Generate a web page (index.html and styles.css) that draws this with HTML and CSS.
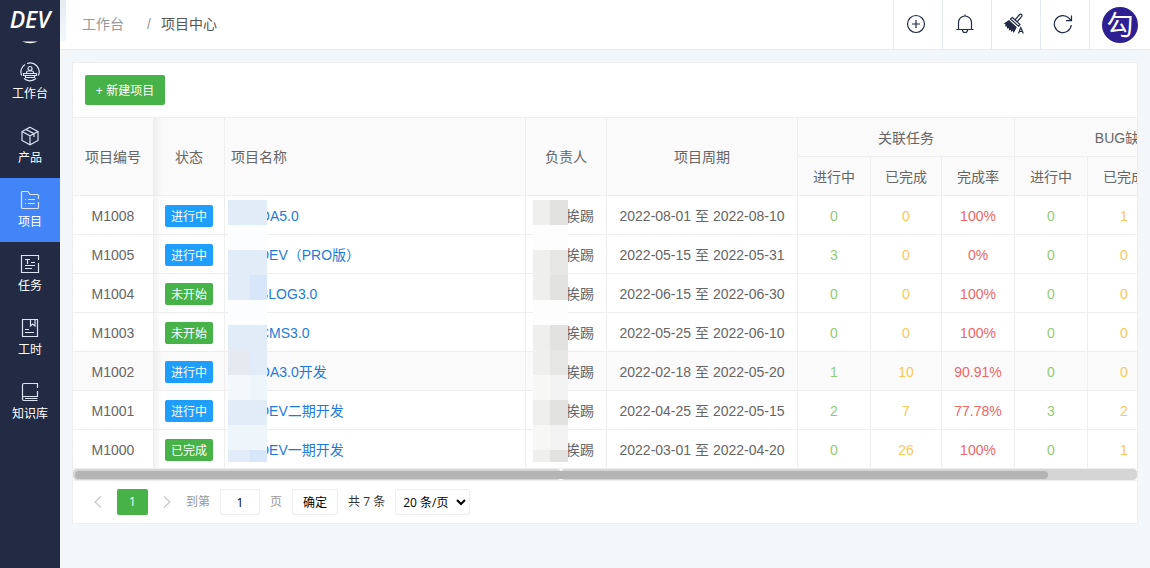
FILE: index.html
```html
<!DOCTYPE html>
<html lang="zh-CN">
<head>
<meta charset="utf-8">
<title>项目中心</title>
<link rel="stylesheet" href="styles.css">
</head>
<body>
<div class="app">
  <aside class="sidebar">
    <div class="logo">DEV<svg class="logo-arc" width="16" height="3" viewBox="0 0 16 3"><path d="M0 0.500H16Q8 4 0 0.500Z" fill="#fff"/></svg></div>
    <nav class="nav">
      <a class="nav-item" href="#"><svg class="nav-icon" viewBox="0 0 20 20"><path d="M1.600 13.500A9 9 0 0 1 5 2.500M7 1.500A9 9 0 0 1 18.400 13.500M16 16.500A9 9 0 0 1 4 16.500"/><circle cx="10" cy="6.500" r="2"/><path d="M6.500 11.500V10.500Q6.500 9 8 9H12Q13.500 9 13.500 10.500V11.500M3.500 11.500H16.500V13.500H3.500ZM5.500 13.500V15.500H14.500V13.500"/></svg><span>工作台</span></a>
      <a class="nav-item" href="#"><svg class="nav-icon" viewBox="0 0 20 20"><path d="M10 1.300L18 5.500V14.500L10 18.700L2 14.500V5.500ZM2 5.500L10 9.700L18 5.500M10 9.700V18.700M6 3.500L14 7.600V11"/></svg><span>产品</span></a>
      <a class="nav-item active" href="#"><svg class="nav-icon" viewBox="0 0 20 20"><path d="M18.500 9V5.500Q18.500 4.500 17.500 4.500H10L8 1.500H2.500Q1.500 1.500 1.500 2.500V17.500Q1.500 18.500 2.500 18.500H17.500Q18.500 18.500 18.500 17.500V12M5 9.500H6M8 9.500H15M5 13.500H6M8 13.500H15"/></svg><span>项目</span></a>
      <a class="nav-item" href="#"><svg class="nav-icon" viewBox="0 0 20 20"><path d="M18.500 6V1.500H1.500V18.500H18.500V9M5 5.500H10M7.500 5.500V10M11 8.500H15M5 11.500H15M5 14.500H12"/></svg><span>任务</span></a>
      <a class="nav-item" href="#"><svg class="nav-icon" viewBox="0 0 20 20"><path d="M2.500 1.500H17.500V18.500H2.500ZM10.500 1.500V8L12.700 6L15 8V1.500M5 11.500H9M5 14.500H14"/></svg><span>工时</span></a>
      <a class="nav-item" href="#"><svg class="nav-icon" viewBox="0 0 20 20"><path d="M17.500 6V1.500H4Q2.500 1.500 2.500 3V17Q2.500 18.500 4 18.500H17.500M17.500 9V14.500H4Q2.500 14.500 2.500 16M5 16.500H17.500"/></svg><span>知识库</span></a>
    </nav>
  </aside>

  <div class="main">
    <header class="header">
      <nav class="crumbs"><a href="#">工作台</a><span class="slash">/</span><span class="here">项目中心</span></nav>
      <div class="tools">
        <button class="tool" aria-label="新增"><svg width="20" height="20" viewBox="0 0 20 20"><circle cx="10" cy="10" r="8.500"/><path d="M10 6V14M6 10H14"/></svg></button>
        <button class="tool" aria-label="消息"><svg width="20" height="20" viewBox="0 0 20 20"><path d="M1.500 15.500H18.500M3.500 15.500V8.500A6.500 6.500 0 0 1 16.500 8.500V15.500M10 0.500V2M7.500 16A2.500 2.500 0 0 0 12.500 16"/></svg></button>
        <button class="tool" aria-label="主题"><svg width="22" height="22" viewBox="0 0 22 22"><path d="M12 7L16.500 1.500Q17.700 0.600 18.700 1.500Q19.500 2.500 18.500 3.600L14 9M7.500 6L9.500 4.500L17 11.500L15.500 13.200Z"/><path class="solid brush" d="M6 7L13.800 14.200L10.700 20L9.700 17.800L8.500 19L7.700 16.700L6.300 17.700L5.700 15L4.200 15.800L3.700 13.300L2.200 13.700L2.500 11.500L0.800 10.500Z"/><path d="M15.500 20.500L17.800 14.500L20.300 20.500M16.300 18.500H19.500"/></svg></button>
        <button class="tool" aria-label="刷新"><svg width="20" height="20" viewBox="0 0 20 20"><path d="M18.300 11A8.500 8.500 0 1 1 16 4.200L18 6.500M18.500 1.500V6.700H13"/></svg></button>
        <a class="user" href="#"><span class="avatar">勾</span></a>
      </div>
      <i class="edge"></i>
    </header>

    <main class="content">
      <section class="card">
        <div class="toolbar"><button class="add">+ 新建项目</button></div>
        <div class="grid">
          <table class="projects">
            <colgroup><col class="w81"><col class="w71"><col class="w301"><col class="w81"><col class="w191"><col class="w73"><col class="w71"><col class="w73"><col class="w73"><col class="w73"><col class="w73"></colgroup>
            <thead>
              <tr><th rowspan="2">项目编号</th><th rowspan="2" class="state">状态</th><th rowspan="2" class="name">项目名称</th><th rowspan="2">负责人</th><th rowspan="2">项目周期</th><th class="sub" colspan="3">关联任务</th><th class="sub" colspan="3">BUG缺陷</th></tr>
              <tr><th class="sub">进行中</th><th class="sub">已完成</th><th class="sub">完成率</th><th class="sub">进行中</th><th class="sub">已完成</th><th class="sub">完成率</th></tr>
            </thead>
            <tbody>
              <tr><td>M1008</td><td class="state"><span class="tag blue">进行中</span></td><td class="name"><a href="#">勾股OA5.0</a></td><td>勾股挨踢</td><td>2022-08-01 至 2022-08-10</td><td class="g">0</td><td class="y">0</td><td class="r">100%</td><td class="g">0</td><td class="y">1</td><td></td></tr>
              <tr><td>M1005</td><td class="state"><span class="tag blue">进行中</span></td><td class="name"><a href="#">勾股DEV（PRO版）</a></td><td>勾股挨踢</td><td>2022-05-15 至 2022-05-31</td><td class="g">3</td><td class="y">0</td><td class="r">0%</td><td class="g">0</td><td class="y">0</td><td></td></tr>
              <tr><td>M1004</td><td class="state"><span class="tag green">未开始</span></td><td class="name"><a href="#">勾股BLOG3.0</a></td><td>勾股挨踢</td><td>2022-06-15 至 2022-06-30</td><td class="g">0</td><td class="y">0</td><td class="r">100%</td><td class="g">0</td><td class="y">0</td><td></td></tr>
              <tr><td>M1003</td><td class="state"><span class="tag green">未开始</span></td><td class="name"><a href="#">勾股CMS3.0</a></td><td>勾股挨踢</td><td>2022-05-25 至 2022-06-10</td><td class="g">0</td><td class="y">0</td><td class="r">100%</td><td class="g">0</td><td class="y">0</td><td></td></tr>
              <tr class="hover"><td>M1002</td><td class="state"><span class="tag blue">进行中</span></td><td class="name"><a href="#">勾股OA3.0开发</a></td><td>勾股挨踢</td><td>2022-02-18 至 2022-05-20</td><td class="g">1</td><td class="y">10</td><td class="r">90.91%</td><td class="g">0</td><td class="y">0</td><td></td></tr>
              <tr><td>M1001</td><td class="state"><span class="tag blue">进行中</span></td><td class="name"><a href="#">勾股DEV二期开发</a></td><td>勾股挨踢</td><td>2022-04-25 至 2022-05-15</td><td class="g">2</td><td class="y">7</td><td class="r">77.78%</td><td class="g">3</td><td class="y">2</td><td></td></tr>
              <tr><td>M1000</td><td class="state"><span class="tag green">已完成</span></td><td class="name"><a href="#">勾股DEV一期开发</a></td><td>勾股挨踢</td><td>2022-03-01 至 2022-04-20</td><td class="g">0</td><td class="y">26</td><td class="r">100%</td><td class="g">0</td><td class="y">1</td><td></td></tr>
            </tbody>
          </table>
          <svg class="mask mask-name" width="39" height="262" viewBox="0 0 39 262" shape-rendering="crispEdges">
            <path fill="#e2ecf8" d="M0 0H39V262H0Z"/>
            <path fill="#fcfdff" d="M0 25H39V50H0ZM0 100H39V125H0Z"/>
            <path fill="#d7e6f9" d="M22 75H39V100H22ZM22 250H39V262H22Z"/>
            <path fill="#e4eaf0" d="M0 150H22V175H0Z"/>
            <path fill="#f3f8fc" d="M0 175H22V200H0Z"/>
            <path fill="#eff6fb" d="M22 175H39V200H22ZM0 225H39V250H0Z"/>
          </svg>
          <svg class="mask mask-owner" width="35" height="262" viewBox="0 0 35 262" shape-rendering="crispEdges">
            <path fill="#efefee" d="M0 0H17V262H0Z"/>
            <path fill="#e2e2e0" d="M17 0H35V262H17Z"/>
            <path fill="#e6e6e5" d="M17 50H35V75H17ZM17 150H35V175H17Z"/>
            <path fill="#fdfdfd" d="M0 25H35V50H0ZM0 100H35V125H0Z"/>
            <path fill="#f7f7f6" d="M0 175H17V200H0ZM0 225H17V250H0Z"/>
            <path fill="#f3f3f3" d="M17 175H35V200H17ZM17 225H35V250H17Z"/>
          </svg>
        </div>
        <div class="scroll"><i class="track"></i><i class="track wide"></i><i class="thumb"></i></div>
        <div class="pager">
          <button class="arrow" aria-label="上一页"><svg width="8" height="12" viewBox="0 0 8 12"><path d="M7 0.500L1 6L7 11.500"/></svg></button>
          <button class="page">1</button>
          <button class="arrow next" aria-label="下一页"><svg width="8" height="12" viewBox="0 0 8 12"><path d="M1 0.500L7 6L1 11.500"/></svg></button>
          <label for="goto">到第</label>
          <input id="goto" type="text" value="1">
          <label for="goto">页</label>
          <button class="ok">确定</button>
          <span class="total">共 7 条</span>
          <select aria-label="每页条数"><option>20 条/页</option></select>
        </div>
      </section>
    </main>
  </div>
</div>
</body>
</html>
```
FILE: styles.css
```css
* { box-sizing: border-box; }
body {
  margin: 0;
  background: #f3f7fa;
  color: #666;
  font: 14px/24px "Liberation Sans", "Noto Sans CJK SC", sans-serif;
}
a { color: inherit; text-decoration: none; }
button, input, select { font: inherit; margin: 0; padding: 0; }
svg { fill: none; display: block; }

.app { display: flex; min-height: 100vh; }

/* sidebar */
.sidebar { flex: none; width: 60px; background: #222a44; color: #fff; }
.logo {
  height: 50px;
  padding: 8px 0 6px;
  display: flex;
  flex-direction: column;
  align-items: center;
  justify-content: space-between;
  font: italic 600 23px/22px "Open Sans", sans-serif;
}
.nav-item {
  height: 64px;
  padding-top: 12px;
  display: flex;
  flex-direction: column;
  align-items: center;
  gap: 4px;
  font-size: 12px;
  line-height: 16px;
}
.nav-item.active { background: #4285f9; }
.nav-icon { width: 20px; height: 20px; stroke: #dbe4f5; stroke-width: 1.2; }

/* header */
.main { flex: 1; min-width: 0; }
.header {
  position: relative;
  height: 50px;
  display: flex;
  justify-content: space-between;
  background: #fff;
  border-bottom: 1px solid #e4eaf0;
}
.edge {
  position: absolute;
  left: 0;
  top: 0;
  width: 6px;
  height: 41px;
  background: linear-gradient(#e4ebf1, #f3f8fc);
}
.crumbs { display: flex; align-items: center; padding: 0 0 2px 22px; color: #999; }
.slash { margin: 0 10px 0 23px; }
.here { color: #555; }
.tools { display: flex; }
.tool {
  width: 49px;
  padding-right: 5px;
  padding-bottom: 1px;
  display: flex;
  align-items: center;
  justify-content: center;
  border: 0;
  border-left: 1px solid #e4eaf0;
  background: none;
}
.tool svg { stroke: #222a44; stroke-width: 1.2; }
.tool .solid { fill: #222a44; }
.tool .brush { stroke: none; }
.user {
  width: 61px;
  display: flex;
  align-items: center;
  justify-content: center;
  border-left: 1px solid #e4eaf0;
}
.avatar {
  width: 36px;
  height: 36px;
  border-radius: 50%;
  background: #2e1f93;
  color: #fff;
  font-size: 27px;
  line-height: 38px;
  text-align: center;
}

/* card */
.content { padding: 12px; }
.card { background: #fff; border: 1px solid #eee; }
.toolbar { padding: 12px; }
.add {
  display: block;
  width: 80px;
  height: 30px;
  padding-top: 2px;
  border: 0;
  border-radius: 2px;
  background: #47b247;
  color: #fff;
  font-size: 12px;
}

/* table */
.grid { position: relative; overflow: hidden; border-top: 1px solid #eee; }
.projects { width: 1161px; table-layout: fixed; border-collapse: separate; border-spacing: 0; }
.w71 { width: 71px; }
.w73 { width: 73px; }
.w81 { width: 81px; }
.w191 { width: 191px; }
.w301 { width: 301px; }
th, td {
  height: 39px;
  padding: 0;
  border: solid #eee;
  border-width: 0 1px 1px 0;
  font-weight: 400;
  text-align: center;
  white-space: nowrap;
}
th { background: #fafafa; }
td, .sub { padding-top: 2px; }
.hover td { background-color: #fafafa; }
.name { padding-left: 6px; text-align: left; }
.name a { color: #1e7bd8; }
th.state, td.state {
  background-image: linear-gradient(to right, rgba(0, 0, 0, 0.05), rgba(0, 0, 0, 0));
  background-size: 8px 100%;
  background-repeat: no-repeat;
}
.tag {
  display: block;
  width: 48px;
  margin: 0 auto;
  padding-top: 2px;
  border-radius: 2px;
  color: #fff;
  font-size: 12px;
  line-height: 20px;
}
.blue { background: #1e9fff; }
.green { background: #47b247; }
.g { color: #91cc75; }
.y { color: #fac858; }
.r { color: #ee6666; }
.mask { position: absolute; top: 82px; }
.mask-name { left: 155px; }
.mask-owner { left: 460px; }

/* scrollbar */
.scroll { position: relative; height: 12px; display: flex; border-bottom: 1px solid #eee; }
.track { flex: 488; border-radius: 4px; background: #d5d5d5; }
.track.wide { flex: 577; }
.thumb {
  position: absolute;
  top: 2px;
  left: 2px;
  right: 89px;
  height: 8px;
  border-radius: 4px;
  background: #b4b4b4;
}

/* pager */
.pager {
  display: flex;
  align-items: center;
  gap: 10px;
  padding: 8px 20px;
  color: #999;
  font: 12px/16px "Open Sans", "Noto Sans CJK SC", sans-serif;
}
.arrow { width: 14px; border: 0; background: none; }
.arrow.next { margin-left: 4px; }
.arrow svg { margin-left: 1px; stroke: #ccc; stroke-width: 1.5; }
.page { width: 31px; height: 26px; border: 0; border-radius: 2px; background: #47b247; color: #fff; }
.pager input, .pager select, .ok {
  height: 26px;
  border: 1px solid #eee;
  border-radius: 2px;
  background: #fff;
  color: #000;
}
.pager input { width: 40px; text-align: center; }
.pager .ok { width: 46px; padding-top: 2px; }
.total { color: #333; }
.pager select { width: 75px; padding-left: 3px; }
```
